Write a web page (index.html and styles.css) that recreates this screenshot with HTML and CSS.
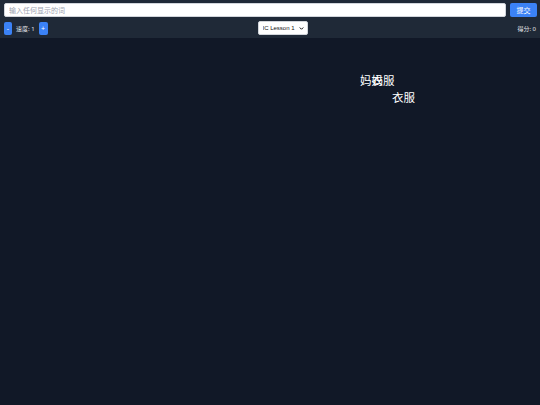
FILE: index.html
```html
<!DOCTYPE html>
<html lang="zh">
<head>
<meta charset="utf-8">
<title>打字游戏</title>
<link rel="stylesheet" href="styles.css">
</head>
<body>
<header class="header">
  <div class="row">
    <input class="word-input" type="text" placeholder="输入任何显示的词">
    <button class="btn submit">提交</button>
  </div>
  <div class="row controls">
    <div class="speed">
      <button class="btn minus">-</button>
      <span class="label">速度: 1</span>
      <button class="btn plus">+</button>
    </div>
    <div class="select-wrap">
      <select class="lesson">
        <option>IC Lesson 1</option>
      </select>
      <svg class="chevron" viewBox="0 0 10 10" width="5" height="5"><path d="M1.5 3 L5 6.5 L8.5 3" fill="none" stroke="#111" stroke-width="2"/></svg>
    </div>
    <div class="score">得分: 0</div>
  </div>
</header>
<main class="canvas">
  <span class="word" style="left:360px;top:37px">妈妈</span>
  <span class="word" style="left:371.5px;top:37px">衣服</span>
  <span class="word" style="left:392px;top:54px">衣服</span>
</main>
</body>
</html>
```
FILE: styles.css
```css
* { box-sizing: border-box; }
html, body {
  margin: 0;
  padding: 0;
  height: 100%;
}
body {
  background: #111827;
  font-family: "Noto Sans", "Noto Sans CJK SC", sans-serif;
  color: #fff;
  overflow: hidden;
  display: flex;
  flex-direction: column;
}
.header {
  background: #1f2937;
  padding: 3px 3px 3px 4px;
  display: flex;
  flex-direction: column;
  gap: 4px;
  flex: none;
}
.row {
  display: flex;
  align-items: center;
  gap: 4px;
}
.word-input {
  flex: 1;
  height: 14px;
  border: 1px solid #d1d5db;
  border-radius: 2px;
  padding: 0 4px;
  font-size: 7px;
  font-family: inherit;
  background: #fff;
  color: #111;
  outline: none;
}
.word-input::placeholder { color: #9ca3af; }
.btn {
  background: #3b82f6;
  color: #fff;
  border: none;
  border-radius: 2px;
  font-family: inherit;
  font-size: 7px;
  padding: 0;
  line-height: 1;
}
.submit {
  width: 27px;
  height: 14px;
}
.controls {
  justify-content: space-between;
  height: 14px;
  padding-right: 1px;
}
.speed {
  display: flex;
  align-items: center;
  gap: 4px;
}
.minus {
  width: 8px;
  height: 13px;
}
.plus {
  width: 9px;
  height: 13px;
}
.label {
  font-size: 6px;
  color: #e5e7eb;
}
.select-wrap {
  position: relative;
  width: 50px;
  height: 14px;
  flex: none;
}
.lesson {
  display: block;
  appearance: none;
  -webkit-appearance: none;
  width: 100%;
  height: 14px;
  margin: 0;
  font-size: 6px;
  font-family: "Liberation Sans", sans-serif;
  padding: 0 0 0 4px;
  border-radius: 2px;
  border: 1px solid #d1d5db;
  background: #fff;
  color: #111;
}
.chevron {
  position: absolute;
  right: 4px;
  top: 5px;
  display: block;
  pointer-events: none;
}
.score {
  font-size: 6px;
  color: #e5e7eb;
}
.canvas {
  position: relative;
  flex: 1;
}
.word {
  position: absolute;
  font-size: 11.5px;
  line-height: 1;
  white-space: nowrap;
  color: #fff;
}
```
